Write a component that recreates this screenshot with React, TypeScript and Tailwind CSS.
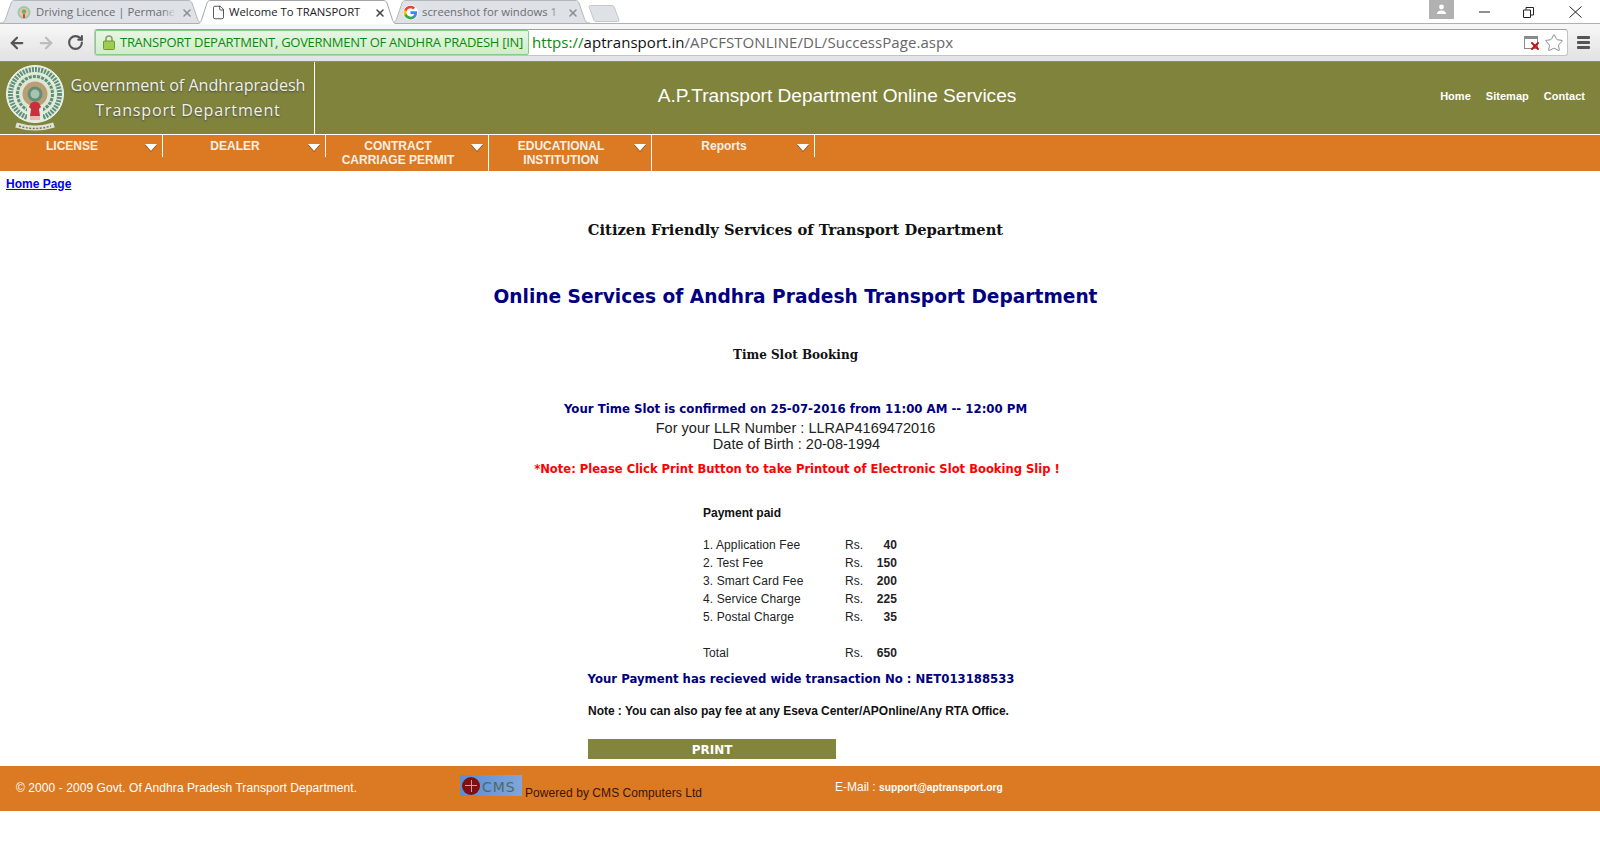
import { ArrowLeft, ArrowRight, RotateCw, Star, File, X } from 'lucide-react';

const sans = { fontFamily: '"Liberation Sans", Arial, sans-serif' };
const chromeFont = { fontFamily: '"Open Sans", sans-serif' };
const verdana = { fontFamily: '"DejaVu Sans", sans-serif' };
const serif = { fontFamily: '"DejaVu Serif", serif' };

function Emblem() {
  return (
    <svg width="62" height="72" viewBox="0 0 62 72" className="shrink-0">
      <circle cx="30" cy="32" r="28.5" fill="#e4ebdf" stroke="#f1f4ec" />
      <circle cx="30" cy="32" r="24.5" fill="none" stroke="#5f9078" strokeWidth="5" strokeDasharray="2 1.1" />
      <circle cx="30" cy="32" r="20" fill="#dce6d2" />
      <circle cx="30" cy="32" r="17.5" fill="none" stroke="#5d8f76" strokeWidth="3" strokeDasharray="3 1.2" />
      <circle cx="30" cy="32" r="14" fill="#e0e6d8" />
      <circle cx="30" cy="32" r="12.5" fill="#b99f73" />
      <circle cx="30" cy="32" r="7.5" fill="#5f8f7a" />
      <circle cx="30" cy="32" r="4.5" fill="#a9c4ad" />
      <path d="M22 46h16v13H22z" fill="#e4ebdf" />
      <path d="M26 41q4-3 8 0l2 4-2 2 1 7h-10l1-7-2-2z" fill="#c92f3d" />
      <path d="M25 54h10v4H25z" fill="#e8b8b8" />
      <path d="M11 63q19 6 38 0" fill="none" stroke="#dde3d2" strokeWidth="5" />
      <path d="M14 64q16 5 32 0" fill="none" stroke="#6a7a5a" strokeWidth="1.4" strokeDasharray="2 1.5" />
    </svg>
  );
}

function GoogleG() {
  return (
    <svg width="15" height="15" viewBox="0 0 24 24" className="rounded-full bg-white">
      <path d="M22.56 12.25c0-.78-.07-1.53-.2-2.25H12v4.26h5.92a5.06 5.06 0 0 1-2.2 3.32v2.77h3.57c2.08-1.92 3.27-4.74 3.27-8.1z" fill="#4285F4" />
      <path d="M12 23c2.97 0 5.46-.98 7.28-2.66l-3.57-2.77c-.98.66-2.23 1.06-3.71 1.06-2.86 0-5.29-1.93-6.16-4.53H2.18v2.84A11 11 0 0 0 12 23z" fill="#34A853" />
      <path d="M5.84 14.09a6.6 6.6 0 0 1 0-4.18V7.07H2.18a11 11 0 0 0 0 9.86l3.66-2.84z" fill="#FBBC05" />
      <path d="M12 5.38c1.62 0 3.06.56 4.21 1.64l3.15-3.15C17.45 2.09 14.97 1 12 1A11 11 0 0 0 2.18 7.07l3.66 2.84C6.71 7.31 9.14 5.38 12 5.38z" fill="#EA4335" />
    </svg>
  );
}

function SmallSeal() {
  return (
    <svg width="14" height="15" viewBox="0 0 14 15">
      <circle cx="7" cy="7.5" r="6.5" fill="#9fc7a8" />
      <circle cx="7" cy="7.5" r="4.5" fill="#e9c89a" />
      <circle cx="7" cy="6.5" r="2.2" fill="#6fa888" />
      <path d="M6 9h2v4H6z" fill="#d2454f" />
    </svg>
  );
}

function TabShape({ w, h, active }: { w: number; h: number; active?: boolean }) {
  const d = `M0 ${h} C4 ${h} 4.5 ${h - 2} 5.5 ${h - 4} L11 3 C12 1 13 0.5 15 0.5 H${w - 15} C${w - 13} 0.5 ${w - 12} 1 ${w - 11} 3 L${w - 5.5} ${h - 4} C${w - 4.5} ${h - 2} ${w - 4} ${h} ${w} ${h}`;
  return (
    <svg width={w} height={h} className="absolute left-0 top-0">
      <path d={d} fill={active ? '#ffffff' : '#dee1e6'} stroke={active ? '#a6a6a6' : '#b4b7bc'} />
    </svg>
  );
}

function Tab({ label, active, w, icon, layout }: { label: string; active?: boolean; w: number; icon: React.ReactNode; layout: string }) {
  const h = active ? 24 : 23;
  return (
    <div className={`relative -mr-[7px] shrink-0 ${active ? 'z-10' : ''}`} style={{ width: w, height: h }}>
      <TabShape w={w} h={h} active={active} />
      <div className={`relative flex h-[25px] items-center text-[11.3px] ${active ? 'text-[#222]' : 'text-[#6a6d72]'} ${layout}`} style={chromeFont}>
        <span className="shrink-0">{icon}</span>
        <span className="relative flex-1 overflow-hidden whitespace-nowrap">
          {label}
          <span className={`absolute right-0 top-0 h-full w-[14px] bg-gradient-to-r from-transparent ${active ? 'to-white' : 'to-[#dee1e6]'}`} />
        </span>
        <X size={12} strokeWidth={3} className={`shrink-0 ${active ? 'text-[#444]' : 'text-[#8a8d92]'}`} />
      </div>
    </div>
  );
}

function NavItem({ line1, line2 }: { line1: string; line2?: string }) {
  return (
    <div className={`relative w-[163px] shrink-0 self-start border-r border-white pr-[18px] pt-[4px] text-center text-[12px] font-bold leading-[14px] text-[#f8efe4] ${line2 ? 'h-[36px]' : 'h-[22px]'}`}>
      <div>{line1}</div>
      {line2 && <div>{line2}</div>}
      <span className="absolute right-[5px] top-[9px] h-0 w-0 border-x-[6px] border-t-[7px] border-x-transparent border-t-white drop-shadow-[0_1px_0_#7a4a18]" />
    </div>
  );
}

const fees = [
  ['1. Application Fee', '40'],
  ['2. Test Fee', '150'],
  ['3. Smart Card Fee', '200'],
  ['4. Service Charge', '225'],
  ['5. Postal Charge', '35'],
];

function FeeRow({ label, amount }: { label: string; amount: string }) {
  return (
    <div className="flex h-[18px] items-center text-[12px] tracking-[0.1px] text-[#222]">
      <span className="w-[142px]">{label}</span>
      <span className="w-[24px]">Rs.</span>
      <span className="w-[28px] text-right font-bold">{amount}</span>
    </div>
  );
}

export default function App() {
  return (
    <div className="h-[860px] overflow-hidden bg-white" style={sans}>
      {/* Browser chrome */}
      <div className="relative flex h-[24px] items-start border-b border-[#b0b0b0] bg-white">
        <Tab w={203} label="Driving Licence | Permane" icon={<SmallSeal />} layout="gap-[5px] pl-[17px] pr-[10px]" />
        <Tab w={202} active label="Welcome To TRANSPORT" icon={<File size={15} strokeWidth={1.2} className="block" />} layout="gap-[3px] pl-[15px] pr-[12px]" />
        <Tab w={199} label="screenshot for windows 1" icon={<GoogleG />} layout="gap-[4px] pl-[12px] pr-[11px]" />
        <svg width="32" height="17" viewBox="0 0 32 17" className="ml-[5px] mt-[5px] shrink-0">
          <path d="M1 1.5q0-1 1.5-1H24q1.5 0 2 1L31 15q.3 1.5-1.5 1.5H8q-1.5 0-2-1z" fill="#dee1e6" stroke="#c4c7cc" />
        </svg>
        <div className="ml-auto flex items-start">
          <div className="mr-[8px] flex h-[19px] w-[25px] items-center justify-center bg-[#b1b1b1]">
            <svg width="11" height="11" viewBox="0 0 11 11"><circle cx="5.5" cy="3" r="2.4" fill="#fff" /><path d="M1 10q0-3.5 4.5-3.5T10 10z" fill="#fff" /></svg>
          </div>
          <div className="flex h-[24px] w-[45px] items-center justify-center">
            <svg width="11" height="2" viewBox="0 0 11 2"><path d="M0 1h11" stroke="#222" /></svg>
          </div>
          <div className="flex h-[24px] w-[43px] items-center justify-center">
            <svg width="11" height="11" viewBox="0 0 11 11" fill="none" stroke="#222"><path d="M.5 3h7v7.5h-7z" /><path d="M3 3V.5h7.5V8H8" /></svg>
          </div>
          <div className="flex h-[24px] w-[50px] items-center justify-center">
            <svg width="13" height="12" viewBox="0 0 13 12" fill="none" stroke="#222"><path d="M.5.5l12 11M12.5.5l-12 11" /></svg>
          </div>
        </div>
      </div>
      <div className="flex h-[37px] items-center bg-gradient-to-b from-[#f7f7f7] to-[#e2e2e2] pl-[8px] pr-[10px]">
        <ArrowLeft size={18} strokeWidth={3} className="text-[#555]" />
        <ArrowRight size={18} strokeWidth={3} className="ml-[11px] text-[#bdbdbd]" />
        <RotateCw size={17} strokeWidth={3} className="ml-[12px] text-[#555]" />
        <div className="ml-[10px] flex h-[27px] flex-1 items-center rounded-[3px] border border-[#c4c4c4] border-t-[#a0a0a0] bg-white">
          <div className="flex h-[25px] w-[434px] shrink-0 items-center gap-[5px] rounded-[2px] border border-[#8cc98c] bg-gradient-to-b from-[#e8f6e4] to-[#cdeec8] pl-[7px] text-[13px] text-[#0b8a0b]" style={chromeFont}>
            <svg width="12" height="15" viewBox="0 0 12 15" className="shrink-0">
              <path d="M3 6V4a3 3 0 0 1 6 0v2" fill="none" stroke="#8e9a70" strokeWidth="1.6" />
              <rect x="0.5" y="6" width="11" height="8.5" rx="1" fill="#9ccc50" stroke="#6e9a2e" />
            </svg>
            <span className="whitespace-nowrap tracking-[-0.28px]">TRANSPORT DEPARTMENT, GOVERNMENT OF ANDHRA PRADESH [IN]</span>
          </div>
          <span className="ml-[3px] text-[15px] tracking-[0.05px] text-[#666]" style={chromeFont}>
            <span className="text-[#0a8a0a]">https://</span><span className="text-[#111]">aptransport.in</span>/APCFSTONLINE/DL/SuccessPage.aspx
          </span>
          <span className="relative ml-auto mr-[6px] block h-[13px] w-[14px] border border-t-[3px] border-[#8a8a8a]">
            <X size={12} strokeWidth={4} className="absolute -bottom-[4px] -right-[4px] text-[#cc1111]" />
          </span>
          <Star size={20} strokeWidth={1} className="mr-[3px] text-[#777]" />
        </div>
        <div className="ml-[9px] flex w-[13px] flex-col gap-[2px]">
          <span className="h-[3px] rounded-[1px] bg-[#555]" />
          <span className="h-[3px] rounded-[1px] bg-[#555]" />
          <span className="h-[3px] rounded-[1px] bg-[#555]" />
        </div>
      </div>

      {/* Site header */}
      <div className="flex h-[73px] items-stretch border-t border-[#8a8a8a] bg-[#7f833c]">
        <div className="flex w-[315px] shrink-0 items-start border-r border-white pl-[5px]">
          <Emblem />
          <div className="mt-[11px] w-[242px] text-center text-[#f0f0e6]" style={{ ...chromeFont, textShadow: '0 1px 2px #444' }}>
            <div className="text-[16.1px] leading-[24px]">Government of Andhrapradesh</div>
            <div className="text-[16.1px] leading-[26px] tracking-[0.8px]">Transport Department</div>
          </div>
        </div>
        <div className="flex-1 pt-[21px] text-center text-[19.1px] leading-[26px] text-white">A.P.Transport Department Online Services</div>
        <div className="flex w-[241px] shrink-0 justify-end gap-[15px] pr-[15px] pt-[27px] text-[11px] font-bold leading-[14px] tracking-[0.03px] text-white">
          <span>Home</span>
          <span>Sitemap</span>
          <span>Contact</span>
        </div>
      </div>

      {/* Menu bar */}
      <div className="flex h-[37px] border-t border-white bg-[#db7a23]">
        <NavItem line1="LICENSE" />
        <NavItem line1="DEALER" />
        <NavItem line1="CONTRACT" line2="CARRIAGE PERMIT" />
        <NavItem line1="EDUCATIONAL" line2="INSTITUTION" />
        <NavItem line1="Reports" />
      </div>

      {/* Content */}
      <div className="h-[595px] pl-[6px] pt-[6px]">
        <a href="#" className="block text-[12px] font-bold leading-[14px] text-[#0000ee] underline">Home Page</a>
        <div className="w-[1579px] text-center">
          <div className="mt-[29px] text-[14.7px] font-bold leading-[20px] text-[#111]" style={serif}>Citizen Friendly Services of Transport Department</div>
          <div className="mt-[44px] text-[18.6px] font-bold leading-[26px] text-[#000080]" style={verdana}>Online Services of Andhra Pradesh Transport Department</div>
          <div className="mt-[36px] text-[12px] font-bold leading-[18px] text-[#111]" style={serif}>Time Slot Booking</div>
          <div className="mt-[37px] text-[11.75px] font-bold leading-[16px] text-[#000080]" style={verdana}>Your Time Slot is confirmed on 25-07-2016 from 11:00 AM -- 12:00 PM</div>
          <div className="mt-[3px] text-[14.5px] leading-[16px] tracking-[0.02px] text-[#222]">For your LLR Number : LLRAP4169472016</div>
          <div className="pl-[2px] text-[14.5px] leading-[16px] tracking-[0.02px] text-[#222]">Date of Birth : 20-08-1994</div>
          <div className="mt-[9px] pl-[3px] text-[11.57px] font-bold leading-[16px] text-[#ff0000]" style={verdana}>*Note: Please Click Print Button to take Printout of Electronic Slot Booking Slip !</div>
        </div>
        <div className="ml-[697px] mt-[28px] text-[12px] font-bold leading-[16px] text-[#111]">Payment paid</div>
        <div className="ml-[697px] mt-[15px]">
          {fees.map(([label, amount]) => (
            <FeeRow key={label} label={label} amount={amount} />
          ))}
          <div className="mt-[18px]">
            <FeeRow label="Total" amount="650" />
          </div>
        </div>
        <div className="w-[1579px] text-center">
          <div className="mt-[9px] pl-[11px] text-[11.7px] font-bold leading-[16px] text-[#000080]" style={verdana}>Your Payment has recieved wide transaction No : NET013188533</div>
        </div>
        <div className="ml-[582px] mt-[16px] text-[12px] font-bold leading-[16px] tracking-[-0.03px] text-[#111]">Note : You can also pay fee at any Eseva Center/APOnline/Any RTA Office.</div>
        <div className="ml-[582px] mt-[20px] flex h-[20px] w-[248px] items-center justify-center bg-[#83853c] pt-[1px] text-[12px] font-bold text-white" style={verdana}>PRINT</div>
      </div>

      {/* Footer */}
      <div className="flex h-[45px] items-center bg-[#db7a23] pl-[16px]">
        <span className="-mt-[2px] w-[444px] text-[12px] tracking-[0.07px] text-white">© 2000 - 2009 Govt. Of Andhra Pradesh Transport Department.</span>
        <div className="-mt-[6px] flex w-[375px] items-end">
          <div className="relative flex h-[21px] w-[62px] items-center gap-[2px] bg-gradient-to-r from-[#5b8dd6] to-[#7fa6dc] pl-[2px]">
            <span className="relative flex h-[18px] w-[18px] shrink-0 items-center justify-center rounded-full bg-[#7e1010]">
              <span className="absolute h-[12px] w-[1px] bg-[#c9a0a0]" />
              <span className="absolute h-[1px] w-[12px] bg-[#c9a0a0]" />
            </span>
            <span className="pt-[2px] text-[14px] leading-none tracking-[1px] text-[#4f6a5e]" style={verdana}>CMS</span>
          </div>
          <span className="-mb-[4px] ml-[3px] text-[12px] leading-[14px] tracking-[0.06px] text-[#3a1505]">Powered by CMS Computers Ltd</span>
        </div>
        <span className="-mt-[4px] text-[12px] text-white">E-Mail : <span className="text-[10.2px] font-bold">support@aptransport.org</span></span>
      </div>
    </div>
  );
}
